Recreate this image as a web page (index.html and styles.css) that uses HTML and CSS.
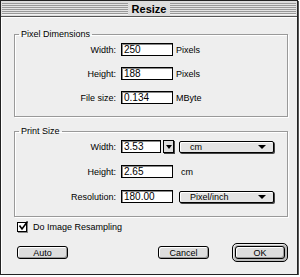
FILE: index.html
```html
<!DOCTYPE html>
<html lang="en">
<head>
    <meta charset="UTF-8">
    <title>Resize</title>
    <link rel="stylesheet" href="styles.css">
</head>
<body>
    <div class="window">
        <div class="titlebar">
            <span class="stripes"></span>
            <span class="title">Resize</span>
            <span class="stripes"></span>
        </div>
        <div class="content">
            <fieldset class="group group-pixels">
                <legend>Pixel Dimensions</legend>
                <div class="row">
                    <label>Width:</label>
                    <input class="field" type="text" value="250">
                    <span class="unit">Pixels</span>
                </div>
                <div class="row">
                    <label>Height:</label>
                    <input class="field" type="text" value="188">
                    <span class="unit">Pixels</span>
                </div>
                <div class="row">
                    <label>File size:</label>
                    <input class="field" type="text" value="0.134">
                    <span class="unit">MByte</span>
                </div>
            </fieldset>

            <fieldset class="group group-print">
                <legend>Print Size</legend>
                <div class="row">
                    <label>Width:</label>
                    <input class="field short" type="text" value="3.53">
                    <span class="arrow-btn"><span class="tri"></span></span>
                    <span class="popup">cm<span class="tri"></span></span>
                </div>
                <div class="row">
                    <label>Height:</label>
                    <input class="field" type="text" value="2.65">
                    <span class="unit wide">cm</span>
                </div>
                <div class="row">
                    <label>Resolution:</label>
                    <input class="field" type="text" value="180.00">
                    <span class="popup">Pixel/inch<span class="tri"></span></span>
                </div>
            </fieldset>

            <div class="check-row">
                <span class="checkbox">
                    <svg width="10" height="10" viewBox="0 0 10 10"><path d="M1.5 4.5 L4 8 L9.5 0.5" fill="none" stroke="#000" stroke-width="1.6"/></svg>
                </span>
                <span>Do Image Resampling</span>
            </div>

            <div class="buttons">
                <button class="btn">Auto</button>
                <span class="spacer"></span>
                <button class="btn">Cancel</button>
                <span class="default-ring"><button class="btn">OK</button></span>
            </div>
        </div>
    </div>
</body>
</html>
```

FILE: styles.css
```css
body {
    margin: 0;
    padding: 0;
    background: #fff;
    font-family: 'Liberation Sans', Arial, sans-serif;
    font-size: 9px;
    color: #000;
}
.window {
    width: 298px;
    height: 275px;
    box-sizing: border-box;
    border: 1px solid #222;
    background: #eeeeee;
    box-shadow: 1px 1px 0 #555;
    display: flex;
    flex-direction: column;
}
.titlebar {
    height: 16px;
    display: flex;
    align-items: center;
    gap: 3px;
    padding: 0 1px;
    background: #dddddd;
    border-bottom: 1px solid #555;
    box-sizing: border-box;
}
.stripes {
    flex: 1;
    height: 11px;
    background: repeating-linear-gradient(#999 0 1px, #e4e4e4 1px 2px);
    border-bottom: 1px solid #f4f4f4;
}
.title {
    font-size: 11px;
    font-weight: bold;
    padding: 0 1px;
}
.content {
    flex: 1;
    padding: 11px 9px 0 12px;
    border-top: 1px solid #fff;
    border-left: 1px solid #fff;
}
.group {
    margin: 0;
    padding: 3px 0 12px 0;
    border: 1px solid #999;
    box-shadow: 1px 1px 0 #fff, inset 1px 1px 0 #fff;
    display: flex;
    flex-direction: column;
    gap: 11px;
}
.group legend {
    margin-left: 4px;
    padding: 0 2px;
    line-height: 11px;
}
.group-print {
    margin-top: 9px;
    gap: 12px;
    padding-bottom: 13px;
}
.row {
    display: flex;
    align-items: center;
    height: 13px;
}
.row label {
    width: 101px;
    text-align: right;
    margin-right: 5px;
}
.field {
    width: 52px;
    height: 13px;
    box-sizing: border-box;
    border: 1px solid #000;
    box-shadow: inset 1px 1px 0 #888;
    padding: 0 2px;
    font-family: 'Liberation Sans', Arial, sans-serif;
    font-size: 10px;
    background: #fff;
    outline: none;
}
.field.short {
    width: 40px;
}
.unit {
    margin-left: 3px;
}
.unit.wide {
    margin-left: 8px;
}
.arrow-btn {
    width: 11px;
    height: 13px;
    box-sizing: border-box;
    margin-left: 2px;
    border: 1px solid #000;
    background: #ddd;
    box-shadow: 1px 1px 0 #444;
    display: flex;
    align-items: center;
    justify-content: center;
}
.tri {
    width: 0;
    height: 0;
    border-left: 4px solid transparent;
    border-right: 4px solid transparent;
    border-top: 4px solid #000;
}
.arrow-btn .tri {
    border-left-width: 3px;
    border-right-width: 3px;
}
.popup {
    width: 95px;
    height: 12px;
    box-sizing: border-box;
    margin-left: 5px;
    padding: 0 7px 0 10px;
    border: 1px solid #000;
    border-radius: 2px;
    background: #e4e4e4;
    box-shadow: inset 1px 1px 0 #fff, 1px 1px 0 #444;
    display: flex;
    align-items: center;
    justify-content: space-between;
}
.row:last-child .popup {
    margin-left: 6px;
}
.check-row {
    display: flex;
    align-items: center;
    gap: 6px;
    margin-top: 5px;
    margin-left: 3px;
}
.checkbox {
    width: 10px;
    height: 10px;
    box-sizing: border-box;
    border: 1px solid #000;
    background: #fff;
    box-shadow: 1px 1px 0 #888;
    position: relative;
}
.checkbox svg {
    position: absolute;
    left: 0;
    top: -2px;
}
.buttons {
    display: flex;
    align-items: center;
    margin-top: 11px;
    padding-left: 3px;
}
.spacer {
    flex: 1;
}
.btn {
    width: 51px;
    height: 13px;
    box-sizing: border-box;
    padding: 0;
    border: 1px solid #000;
    border-radius: 3px;
    background: #dddddd;
    box-shadow: inset 1px 1px 0 #fff, inset -1px -1px 0 #999;
    font-family: 'Liberation Sans', Arial, sans-serif;
    font-size: 9px;
    color: #000;
}
.default-ring {
    margin-left: 23px;
    padding: 2px;
    border: 1px solid #000;
    border-radius: 5px;
    background: #bbb;
    box-shadow: inset 1px 1px 0 #eee;
    display: flex;
}
.default-ring .btn {
    width: 50px;
}
```
